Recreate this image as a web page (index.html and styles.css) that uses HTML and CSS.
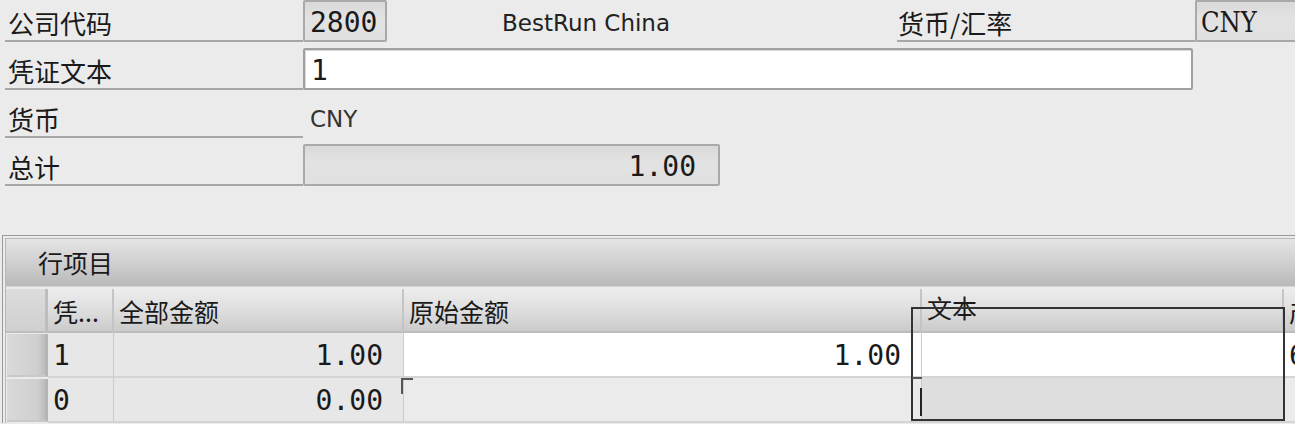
FILE: index.html
```html
<!DOCTYPE html>
<html lang="zh-CN">
<head>
<meta charset="utf-8">
<title>凭证</title>
<link rel="stylesheet" href="styles.css">
</head>
<body>
<div class="screen">
  <div class="form">
    <div class="row">
      <div class="label">公司代码</div>
      <div class="field ro code mono">2800</div>
      <div class="desc">BestRun China</div>
      <div class="label label-r">货币/汇率</div>
      <div class="field ro cur serif">CNY</div>
    </div>
    <div class="row">
      <div class="label">凭证文本</div>
      <div class="field input text mono">1</div>
    </div>
    <div class="row">
      <div class="label">货币</div>
      <div class="plain">CNY</div>
    </div>
    <div class="row">
      <div class="label">总计</div>
      <div class="field ro total mono">1.00</div>
    </div>
  </div>

  <div class="panel">
    <div class="panel-inner">
      <div class="panel-title">行项目</div>
      <div class="grid">
        <div class="hd sel"></div>
        <div class="hd">凭...</div>
        <div class="hd">全部金额</div>
        <div class="hd">原始金额</div>
        <div class="hd hd-text">文本</div>
        <div class="hd">产品</div>

        <div class="selbtn"></div>
        <div class="c ro mono">1</div>
        <div class="c ro mono num">1.00</div>
        <div class="c white mono num">1.00</div>
        <div class="c white"></div>
        <div class="c white mono">6</div>

        <div class="selbtn"></div>
        <div class="c ro mono">0</div>
        <div class="c ro mono num">0.00</div>
        <div class="c empty"></div>
        <div class="c dim"></div>
        <div class="c empty"></div>
      </div>
    </div>
    <div class="focus"></div>
    <div class="corner corner-a"></div>
    <div class="corner corner-b"></div>
    <div class="caret"></div>
  </div>
</div>
</body>
</html>
```
FILE: styles.css
```css
html, body {
  margin: 0;
  padding: 0;
  background: #ebebeb;
  overflow: hidden;
}
.screen {
  width: 1295px;
  height: 424px;
  overflow: hidden;
  position: relative;
  font-family: "Noto Sans CJK SC", "DejaVu Sans", sans-serif;
  color: #1a1a1a;
}
.form {
  display: grid;
  grid-auto-rows: 42px;
  row-gap: 6px;
}
.row {
  display: flex;
  align-items: stretch;
}
.label {
  margin-left: 5px;
  width: 298px;
  box-sizing: border-box;
  padding-left: 3px;
  padding-top: 3px;
  border-bottom: 2px solid #a6a6a6;
  font-size: 26px;
  line-height: 40px;
  white-space: nowrap;
}
.label-r {
  margin-left: 0;
  padding-left: 1px;
}
.field {
  box-sizing: border-box;
  border: 2px solid #a9a9a9;
  border-radius: 2px;
  line-height: 41px;
  padding: 0 6px;
  white-space: nowrap;
  overflow: hidden;
}
.ro {
  background: linear-gradient(#d9d9d9, #e2e2e2 40%, #e0e0e0);
}
.input {
  background: #ffffff;
  border-color: #a0a0a0;
  box-shadow: inset 1px 1px 0 #d8d8d8;
}
.mono {
  font-family: "DejaVu Sans Mono", monospace;
  font-size: 28px;
}
.serif {
  font-family: "DejaVu Serif", "Liberation Serif", serif;
  font-stretch: condensed;
  font-size: 27px;
}
.code { width: 84px; padding-left: 5px; }
.cur { width: 110px; padding-left: 4px; border-right: none; }
.text { width: 890px; }
.total {
  width: 417px;
  text-align: right;
  padding-right: 22px;
}
.desc {
  width: 510px;
  box-sizing: border-box;
  padding-left: 115px;
  font-family: "DejaVu Sans", sans-serif;
  font-size: 23px;
  line-height: 46px;
  color: #222;
}
.plain {
  padding-left: 7px;
  font-family: "DejaVu Sans", sans-serif;
  font-size: 23px;
  line-height: 46px;
  color: #333;
}

/* panel */
.panel {
  position: relative;
  margin-top: 49px;
  margin-left: 2px;
  width: 1400px;
  border-top: 1px solid #9a9a9a;
  border-left: 1px solid #9a9a9a;
  padding: 2px 0 0 2px;
}
.panel-inner {
  border-top: 1px solid #b8b8b8;
  border-left: 1px solid #b8b8b8;
}
.panel-title {
  height: 48px;
  box-sizing: border-box;
  padding-left: 32px;
  font-size: 25px;
  line-height: 46px;
  background: linear-gradient(#e4e4e4, #d2d2d2 45%, #b9b9b9);
  border-bottom: 1px solid #d6d6d6;
}
.grid {
  display: grid;
  grid-template-columns: 42px 66px 290px 518px 362px 200px;
  grid-template-rows: 44px 45px 45px;
  margin-top: 2px;
}
.hd {
  box-sizing: border-box;
  background: linear-gradient(#ededed, #dedede 50%, #cbcbcb);
  border-right: 2px solid #c4c4c4;
  border-bottom: 2px solid #bdbdbd;
  padding-left: 5px;
  font-size: 25px;
  line-height: 44px;
  white-space: nowrap;
  overflow: hidden;
}
.hd.sel {
  background: linear-gradient(#dcdcdc, #d0d0d0);
  border-right: 3px solid #bdbdbd;
}
.hd-text {
  line-height: 36px;
}
.selbtn {
  box-sizing: border-box;
  margin: 1px 0 1px 1px;
  background: linear-gradient(90deg, #d9d9d9, #cfcfcf 80%, #bdbdbd);
  border-right: 3px solid #b5b5b5;
  border-bottom: 2px solid #c9c9c9;
}
.c {
  box-sizing: border-box;
  border-right: 1px solid #cbcbcb;
  border-bottom: 2px solid #d4d4d4;
  padding: 0 5px;
  line-height: 46px;
  white-space: nowrap;
  overflow: hidden;
}
.c.ro { background: #e7e7e7; }
.c.white { background: #ffffff; }
.c.empty { background: #ebebeb; }
.c.dim { background: #dedede; }
.num {
  text-align: right;
  padding-right: 20px;
}

/* overlays */
.focus {
  position: absolute;
  left: 908px;
  top: 71px;
  width: 374px;
  height: 114px;
  box-sizing: border-box;
  border: 2px solid #333333;
}
.corner {
  position: absolute;
  border-top: 2px solid #555;
  border-left: 2px solid #555;
}
.corner-a {
  left: 398px;
  top: 142px;
  width: 10px;
  height: 14px;
}
.corner-b {
  left: 909px;
  top: 141px;
  width: 8px;
  height: 0;
}
.caret {
  position: absolute;
  left: 917px;
  top: 152px;
  width: 2px;
  height: 28px;
  background: #222;
}
```
